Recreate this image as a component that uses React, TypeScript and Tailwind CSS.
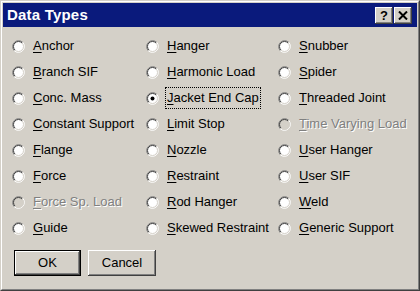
import React from "react";

type Item = { label: string; disabled?: boolean; checked?: boolean };

const columns: Item[][] = [
  [
    { label: "Anchor" },
    { label: "Branch SIF" },
    { label: "Conc. Mass" },
    { label: "Constant Support" },
    { label: "Flange" },
    { label: "Force" },
    { label: "Force Sp. Load", disabled: true },
    { label: "Guide" },
  ],
  [
    { label: "Hanger" },
    { label: "Harmonic Load" },
    { label: "Jacket End Cap", checked: true },
    { label: "Limit Stop" },
    { label: "Nozzle" },
    { label: "Restraint" },
    { label: "Rod Hanger" },
    { label: "Skewed Restraint" },
  ],
  [
    { label: "Snubber" },
    { label: "Spider" },
    { label: "Threaded Joint" },
    { label: "Time Varying Load", disabled: true },
    { label: "User Hanger" },
    { label: "User SIF" },
    { label: "Weld" },
    { label: "Generic Support" },
  ],
];

function Radio({ checked, disabled }: { checked?: boolean; disabled?: boolean }) {
  return (
    <svg width="13" height="13" viewBox="0 0 13 13" className="shrink-0">
      <circle cx="6.5" cy="6.5" r="5.5" fill={disabled ? "#d4d0c8" : "#ffffff"} />
      <path d="M2.26 10.74 A6 6 0 0 1 10.74 2.26" stroke="#808080" strokeWidth="1" fill="none" />
      <path d="M10.74 2.26 A6 6 0 0 1 2.26 10.74" stroke="#ffffff" strokeWidth="1" fill="none" />
      <path d="M2.96 10.04 A5 5 0 0 1 10.04 2.96" stroke="#404040" strokeWidth="1" fill="none" />
      <path d="M10.04 2.96 A5 5 0 0 1 2.96 10.04" stroke="#d4d0c8" strokeWidth="1" fill="none" />
      {checked && <circle cx="6.5" cy="6.5" r="2" fill="#000000" />}
    </svg>
  );
}

function Label({ item }: { item: Item }) {
  const first = item.label.charAt(0);
  const rest = item.label.slice(1);
  const text = (
    <>
      <span className="underline underline-offset-[2px]">{first}</span>
      {rest}
    </>
  );
  if (item.disabled) {
    return (
      <span className="whitespace-nowrap text-[#808080] [text-shadow:1px_1px_0_#ffffff]">{text}</span>
    );
  }
  if (item.checked) {
    return (
      <span className="whitespace-nowrap outline outline-1 outline-dotted outline-black px-[1px] -mx-[1px]">
        {text}
      </span>
    );
  }
  return <span className="whitespace-nowrap text-black">{text}</span>;
}

const raised =
  "shadow-[inset_-1px_-1px_#404040,inset_1px_1px_#ffffff,inset_-2px_-2px_#808080,inset_2px_2px_#d4d0c8]";

export default function App() {
  return (
    <div
      className="w-[420px] h-[291px] bg-[#d4d0c8] border border-t-[#d4d0c8] border-l-[#d4d0c8] border-r-[#404040] border-b-[#404040] text-[13px]"
      style={{ fontFamily: '"Liberation Sans", Arial, sans-serif' }}
    >
      <div className="h-full border border-t-white border-l-white border-r-[#808080] border-b-[#808080] p-[1px] flex flex-col">
        <div className="h-[24px] bg-[#0a1a7c] flex items-center justify-between pl-[4px] pr-[5px]">
          <span className="text-white font-bold text-[15px] tracking-[0.2px]">Data Types</span>
          <div className="flex gap-[1px]">
            <div className={`w-[18px] h-[17px] bg-[#d4d0c8] flex items-center justify-center ${raised}`}>
              <span className="font-bold text-[13px] leading-none text-black">?</span>
            </div>
            <div className={`w-[18px] h-[17px] bg-[#d4d0c8] flex items-center justify-center ${raised}`}>
              <svg width="10" height="9" viewBox="0 0 10 9">
                <path d="M1 0.5 L9 8.5 M9 0.5 L1 8.5" stroke="#000" strokeWidth="2" />
              </svg>
            </div>
          </div>
        </div>

        <div className="pt-[6px] pl-[9px] grid grid-cols-[134px_132px_1fr]">
          {columns.map((col, ci) => (
            <div key={ci} className="flex flex-col">
              {col.map((item) => (
                <div key={item.label} className="h-[26px] flex items-center gap-[8px]">
                  <Radio checked={item.checked} disabled={item.disabled} />
                  <Label item={item} />
                </div>
              ))}
            </div>
          ))}
        </div>

        <div className="mt-[9px] pl-[11px] flex gap-[7px]">
          <div className="w-[67px] h-[26px] border border-black">
            <div className={`w-full h-full flex items-center justify-center text-black ${raised}`}>OK</div>
          </div>
          <div className={`w-[68px] h-[26px] flex items-center justify-center text-black ${raised}`}>Cancel</div>
        </div>
      </div>
    </div>
  );
}
